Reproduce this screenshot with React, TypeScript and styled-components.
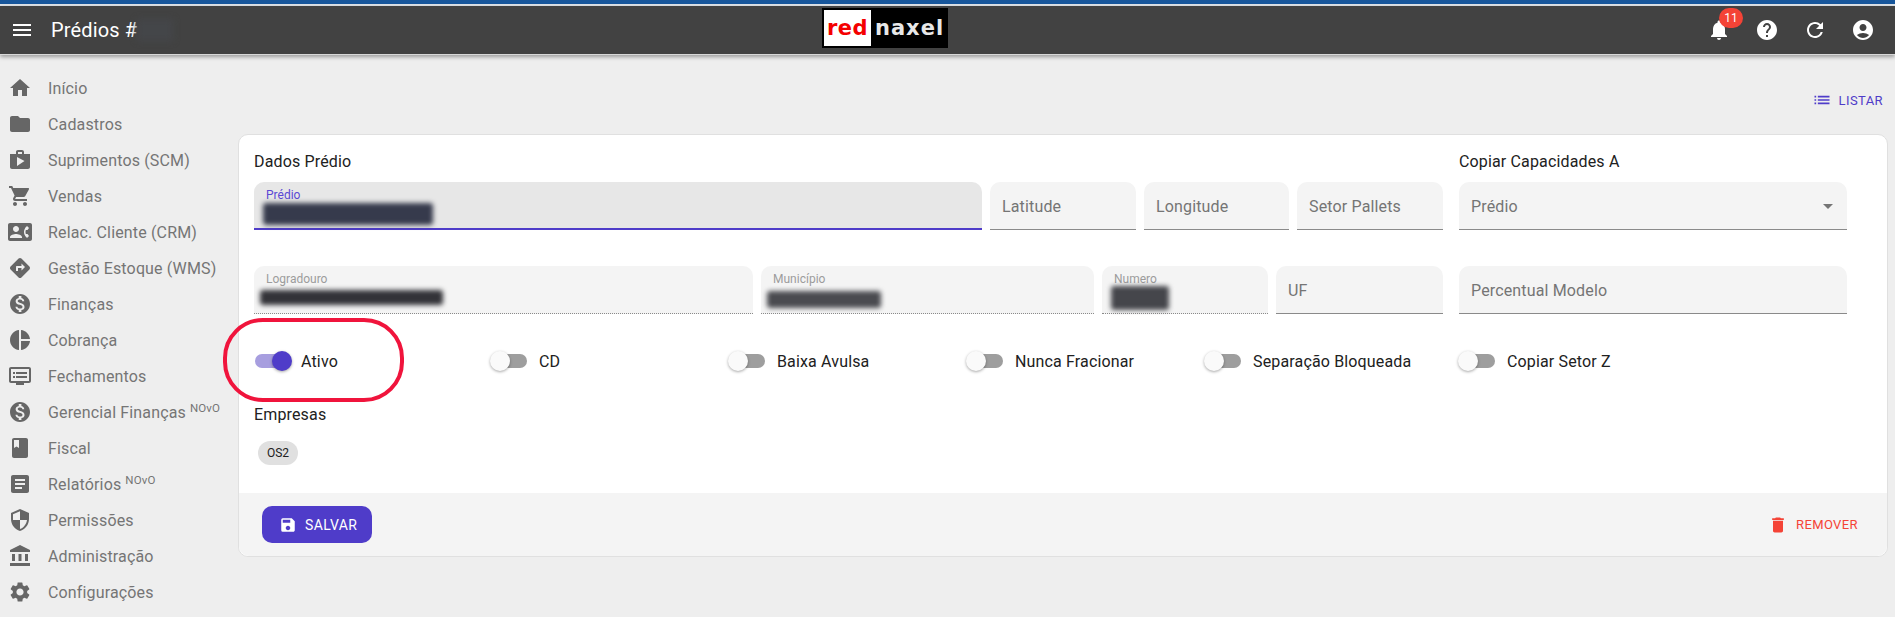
import React from "react";
import styled, { createGlobalStyle } from "styled-components";
import {
    MdAccountBalance,
    MdAccountCircle,
    MdArrowDropDown,
    MdArticle,
    MdBook,
    MdContactPhone,
    MdDelete,
    MdDirections,
    MdDvr,
    MdFolder,
    MdHelp,
    MdHome,
    MdList,
    MdMenu,
    MdMonetizationOn,
    MdNotifications,
    MdPieChart,
    MdRefresh,
    MdSave,
    MdSecurity,
    MdSettings,
    MdShop,
    MdShoppingCart,
} from "react-icons/md";

const PRIMARY = "#4f3cc9";

const menuItems = [
    { label: "Início", icon: MdHome },
    { label: "Cadastros", icon: MdFolder },
    { label: "Suprimentos (SCM)", icon: MdShop },
    { label: "Vendas", icon: MdShoppingCart },
    { label: "Relac. Cliente (CRM)", icon: MdContactPhone },
    { label: "Gestão Estoque (WMS)", icon: MdDirections },
    { label: "Finanças", icon: MdMonetizationOn },
    { label: "Cobrança", icon: MdPieChart },
    { label: "Fechamentos", icon: MdDvr },
    { label: "Gerencial Finanças", icon: MdMonetizationOn, isNew: true },
    { label: "Fiscal", icon: MdBook },
    { label: "Relatórios", icon: MdArticle, isNew: true },
    { label: "Permissões", icon: MdSecurity },
    { label: "Administração", icon: MdAccountBalance },
    { label: "Configurações", icon: MdSettings },
];

const switches = [
    { label: "Ativo", on: true },
    { label: "CD", on: false },
    { label: "Baixa Avulsa", on: false },
    { label: "Nunca Fracionar", on: false },
    { label: "Separação Bloqueada", on: false },
    { label: "Copiar Setor Z", on: false },
];

const App = () => {
    return (
        <Page>
            <GlobalStyle />
            <TopStrip />
            <Header>
                <HeaderLeft>
                    <MdMenu size={24} color="#fff" />
                    <PageTitle>Prédios #</PageTitle>
                    <TitleSmudge />
                </HeaderLeft>
                <Logo>
                    <LogoRed>red</LogoRed>
                    <LogoWhite>naxel</LogoWhite>
                </Logo>
                <HeaderActions>
                    <HeaderAction>
                        <MdNotifications size={24} />
                        <Badge>11</Badge>
                    </HeaderAction>
                    <HeaderAction>
                        <MdHelp size={24} />
                    </HeaderAction>
                    <HeaderAction>
                        <MdRefresh size={24} />
                    </HeaderAction>
                    <HeaderAction>
                        <MdAccountCircle size={24} />
                    </HeaderAction>
                </HeaderActions>
            </Header>
            <Body>
                <Sidebar>
                    {menuItems.map((item) => (
                        <MenuItem key={item.label}>
                            <item.icon size={24} />
                            <span>{item.label}</span>
                            {item.isNew && <NewTag>NOvO</NewTag>}
                        </MenuItem>
                    ))}
                </Sidebar>
                <Main>
                    <TopActions>
                        <ListButton>
                            <MdList size={20} />
                            LISTAR
                        </ListButton>
                    </TopActions>
                    <Card>
                        <CardBody>
                            <FormGrid>
                                <SectionTitle>Dados Prédio</SectionTitle>
                                <SectionTitle>Copiar Capacidades A</SectionTitle>
                                <FieldRow columns="728px 146px 145px 146px">
                                    <Field focused>
                                        <SmallLabel focused>Prédio</SmallLabel>
                                        <Blur width={170} height={22} offset={-3} top={1} tone="#363a4c" />
                                    </Field>
                                    <Field>
                                        <Placeholder>Latitude</Placeholder>
                                    </Field>
                                    <Field>
                                        <Placeholder>Longitude</Placeholder>
                                    </Field>
                                    <Field>
                                        <Placeholder>Setor Pallets</Placeholder>
                                    </Field>
                                </FieldRow>
                                <Field>
                                    <Placeholder>Prédio</Placeholder>
                                    <SelectArrow>
                                        <MdArrowDropDown size={24} />
                                    </SelectArrow>
                                </Field>
                                <FieldRow columns="499px 333px 166px 167px">
                                    <Field disabled>
                                        <SmallLabel>Logradouro</SmallLabel>
                                        <Blur width={183} height={15} offset={-6} top={4} tone="#333338" />
                                    </Field>
                                    <Field disabled>
                                        <SmallLabel>Município</SmallLabel>
                                        <Blur width={114} height={17} offset={-6} top={5} tone="#4a4b50" />
                                    </Field>
                                    <Field disabled>
                                        <SmallLabel>Numero</SmallLabel>
                                        <Blur width={58} height={24} offset={-3} top={0} tone="#45464b" />
                                    </Field>
                                    <Field>
                                        <Placeholder>UF</Placeholder>
                                    </Field>
                                </FieldRow>
                                <Field>
                                    <Placeholder>Percentual Modelo</Placeholder>
                                </Field>
                            </FormGrid>
                            <SwitchRow>
                                {switches.map((item) => (
                                    <SwitchItem key={item.label}>
                                        <Track on={item.on}>
                                            <Thumb on={item.on} />
                                        </Track>
                                        {item.label}
                                    </SwitchItem>
                                ))}
                            </SwitchRow>
                            <CompaniesTitle>Empresas</CompaniesTitle>
                            <Chip>OS2</Chip>
                        </CardBody>
                        <CardFooter>
                            <SaveButton>
                                <MdSave size={18} />
                                SALVAR
                            </SaveButton>
                            <RemoveButton>
                                <MdDelete size={20} />
                                REMOVER
                            </RemoveButton>
                        </CardFooter>
                        <Annotation />
                    </Card>
                </Main>
            </Body>
        </Page>
    );
};

const GlobalStyle = createGlobalStyle`
    html, body {
        margin: 0;
        padding: 0;
        background: #eeeeee;
        overflow: hidden;
    }

    * {
        box-sizing: border-box;
    }
`;

const Page = styled.div`
    width: 1895px;
    height: 617px;
    overflow: hidden;
    background: #eeeeee;
    font-family: Roboto, "Liberation Sans", sans-serif;
`;

const TopStrip = styled.div`
    height: 6px;
    background: #17569b;
    border-bottom: 2px solid #dfe3e8;
`;

const Header = styled.header`
    height: 49px;
    display: flex;
    align-items: center;
    justify-content: space-between;
    position: relative;
    padding-left: 10px;
    background: #424242;
    border-bottom: 1px solid #d8d8d8;
    box-shadow: 0 2px 4px rgba(0, 0, 0, 0.35);
`;

const HeaderLeft = styled.div`
    display: flex;
    align-items: center;
    width: 400px;
`;

const PageTitle = styled.h1`
    margin: 0 0 0 17px;
    color: #fff;
    font-size: 20px;
    font-weight: 400;
    letter-spacing: 0.15px;
`;

const TitleSmudge = styled.div`
    width: 36px;
    height: 22px;
    background: #444649;
    filter: blur(3px);
`;

const Logo = styled.div`
    position: absolute;
    left: 822px;
    top: 2px;
    width: 126px;
    height: 40px;
    display: flex;
    align-items: center;
    padding: 2px;
    background: #000;
    font-family: "DejaVu Sans", sans-serif;
    font-size: 21px;
    font-weight: 700;
    line-height: 36px;
`;

const LogoRed = styled.div`
    width: 47px;
    height: 36px;
    color: #f40000;
    background: #fff;
    text-align: center;
    letter-spacing: 0.5px;
`;

const LogoWhite = styled.div`
    margin-left: 4px;
    color: #e8e8e8;
    letter-spacing: 1px;
`;

const HeaderActions = styled.div`
    display: flex;
    align-items: center;
    padding-right: 8px;
`;

const HeaderAction = styled.div`
    width: 48px;
    height: 48px;
    display: flex;
    align-items: center;
    justify-content: center;
    position: relative;
    color: #fff;
`;

const Badge = styled.span`
    position: absolute;
    top: 2px;
    left: 24px;
    width: 24px;
    height: 20px;
    border-radius: 10px;
    background: #f44336;
    color: #fff;
    font-size: 12px;
    line-height: 20px;
    text-align: center;
`;

const Body = styled.div`
    display: flex;
    height: 562px;
`;

const Sidebar = styled.nav`
    width: 238px;
    flex-shrink: 0;
    padding-top: 15px;
`;

const MenuItem = styled.div`
    height: 36px;
    display: flex;
    align-items: center;
    padding-left: 8px;
    color: #757575;
    font-size: 16px;
    letter-spacing: 0.15px;
    white-space: nowrap;

    svg {
        flex-shrink: 0;
        margin-right: 16px;
        color: #666666;
    }
`;

const NewTag = styled.sup`
    align-self: flex-start;
    margin: 9px 0 0 4px;
    font-size: 11.5px;
    line-height: 11px;
`;

const Main = styled.main`
    flex: 1;
    padding-right: 7px;
`;

const TopActions = styled.div`
    height: 79px;
    display: flex;
    justify-content: flex-end;
    align-items: flex-start;
    padding-top: 35px;
`;

const ListButton = styled.div`
    display: flex;
    align-items: center;
    gap: 7px;
    padding-right: 5px;
    color: ${PRIMARY};
    font-size: 13px;
    letter-spacing: 0.4px;
`;

const Card = styled.section`
    height: 423px;
    position: relative;
    display: flex;
    flex-direction: column;
    background: #fff;
    border: 1px solid #e0e0e0;
    border-radius: 10px;
    overflow: visible;
`;

const CardBody = styled.div`
    flex: 1;
    padding: 15px 15px 0;
`;

const FormGrid = styled.div`
    display: grid;
    grid-template-columns: 1189px 388px;
    column-gap: 16px;
    grid-template-rows: 32px 84px 48px;
    align-items: start;
`;

const SectionTitle = styled.div`
    color: #212121;
    font-size: 16px;
    line-height: 24px;
    letter-spacing: 0.15px;
`;

const FieldRow = styled.div<{ columns: string }>`
    display: grid;
    grid-template-columns: ${({ columns }) => columns};
    column-gap: 8px;
`;

const Field = styled.div<{ focused?: boolean; disabled?: boolean }>`
    height: 48px;
    position: relative;
    padding: 6px 12px 0;
    background: ${({ focused }) => (focused ? "#e7e7e7" : "#f4f4f4")};
    border-radius: 10px 10px 0 0;
    border-bottom: ${({ focused, disabled }) =>
        focused
            ? `2px solid ${PRIMARY}`
            : disabled
              ? "1px dotted #8a8a8a"
              : "1px solid #8a8a8a"};
`;

const SmallLabel = styled.div<{ focused?: boolean }>`
    color: ${({ focused }) => (focused ? "#5a48d4" : "#9c9c9c")};
    font-size: 12px;
    line-height: 14px;
`;

const Placeholder = styled.div`
    padding-top: 9px;
    color: #757575;
    font-size: 16px;
    line-height: 20px;
    letter-spacing: 0.15px;
`;

const SelectArrow = styled.div`
    position: absolute;
    top: 12px;
    right: 7px;
    color: #757575;
    display: flex;
`;

const Blur = styled.div<{ width: number; height: number; offset: number; top: number; tone: string }>`
    width: ${({ width }) => width}px;
    height: ${({ height }) => height}px;
    margin-top: ${({ top }) => top}px;
    margin-left: ${({ offset }) => offset}px;
    background: ${({ tone }) => tone};
    border-radius: 3px;
    filter: blur(2.5px);
`;

const SwitchRow = styled.div`
    display: grid;
    grid-template-columns: repeat(4, 238px) 254px 1fr;
    height: 40px;
    margin-top: 27px;
    padding-left: 1px;
`;

const SwitchItem = styled.div`
    display: flex;
    align-items: center;
    gap: 12px;
    color: #212121;
    font-size: 16px;
    letter-spacing: 0.15px;
`;

const Track = styled.div<{ on: boolean }>`
    width: 34px;
    height: 14px;
    position: relative;
    border-radius: 7px;
    background: ${({ on }) => (on ? "#a79edf" : "#9e9e9e")};
`;

const Thumb = styled.div<{ on: boolean }>`
    width: 20px;
    height: 20px;
    position: absolute;
    top: -3px;
    left: ${({ on }) => (on ? "17px" : "-3px")};
    border-radius: 50%;
    background: ${({ on }) => (on ? PRIMARY : "#fafafa")};
    box-shadow: 0 1px 3px rgba(0, 0, 0, 0.35);
`;

const CompaniesTitle = styled.div`
    margin-top: 22px;
    color: #212121;
    font-size: 16px;
    line-height: 24px;
    letter-spacing: 0.15px;
`;

const Chip = styled.div`
    width: 40px;
    height: 24px;
    margin: 14px 0 0 4px;
    border-radius: 12px;
    background: #e0e0e0;
    color: #212121;
    font-size: 12px;
    line-height: 24px;
    text-align: center;
`;

const CardFooter = styled.footer`
    height: 63px;
    display: flex;
    justify-content: space-between;
    align-items: flex-start;
    padding: 13px 29px 0 23px;
    background: #f4f4f4;
    border-radius: 0 0 10px 10px;
`;

const SaveButton = styled.div`
    width: 110px;
    height: 37px;
    display: flex;
    align-items: center;
    gap: 8px;
    padding-left: 17px;
    border-radius: 10px;
    background: ${PRIMARY};
    color: #fff;
    font-size: 14px;
    letter-spacing: 0.4px;
`;

const RemoveButton = styled.div`
    height: 37px;
    display: flex;
    align-items: center;
    gap: 8px;
    color: #f44336;
    font-size: 13px;
    letter-spacing: 0.4px;
`;

const Annotation = styled.div`
    position: absolute;
    left: -16px;
    top: 183px;
    width: 181px;
    height: 84px;
    border: 4px solid #f0143c;
    border-radius: 40px;
    pointer-events: none;
`;

export default App;
